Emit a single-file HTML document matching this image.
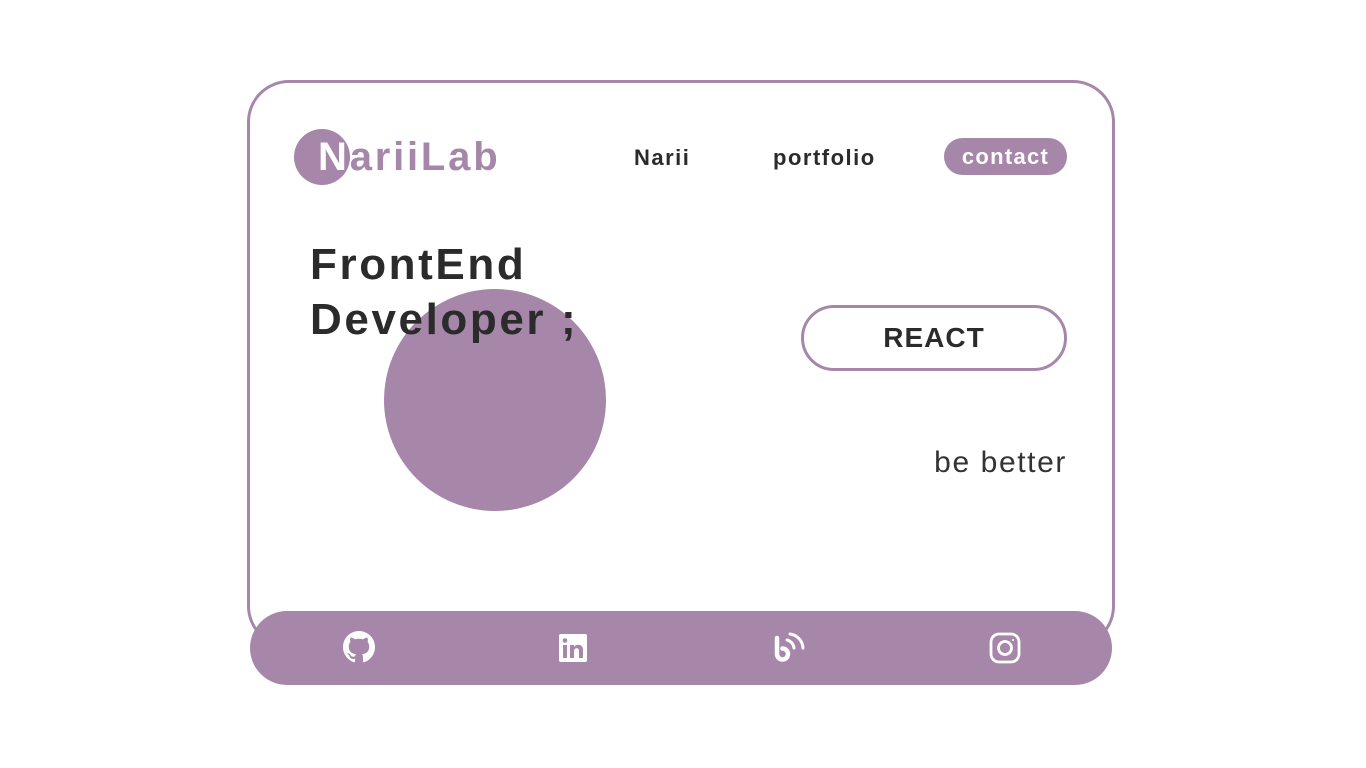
<!DOCTYPE html>
<html><head><meta charset="utf-8"><style>
*{margin:0;padding:0;box-sizing:border-box}
body{width:1366px;height:768px;background:#fff;position:relative;overflow:hidden;font-family:"Liberation Sans",sans-serif;color:#2b2b2b}
.a{position:absolute}
.card{left:247px;top:80px;width:868px;height:568px;border:3px solid #a687a9;border-radius:42px}
.bar{left:250px;top:611px;width:862px;height:74px;background:#a687a9;border-radius:37px}
.logoc{left:294px;top:129px;width:56px;height:56px;border-radius:50%;background:#a687a9}
.logo{left:318px;top:135px;font-size:40px;font-weight:bold;color:#a687a9;letter-spacing:2.8px;line-height:44px}
.nav{font-size:22px;font-weight:bold;top:145px;line-height:26px;letter-spacing:1.5px}
.pill{left:944px;top:138px;width:123px;height:37px;border-radius:19px;background:#a687a9;color:#fff;font-size:22px;font-weight:bold;text-align:center;line-height:38px;letter-spacing:1.3px}
.h{left:310px;font-size:44px;font-weight:bold;letter-spacing:2.6px;line-height:50px}
.circ{left:384px;top:289px;width:222px;height:222px;border-radius:50%;background:#a687a9}
.btn{left:801px;top:305px;width:266px;height:66px;border:3px solid #a687a9;border-radius:33px;text-align:center;line-height:60px;font-size:28px;font-weight:bold;letter-spacing:1px}
.bb{right:299px;top:446px;font-size:30px;line-height:34px;letter-spacing:1.6px;color:#333}
svg{position:absolute}
</style></head><body>
<div class="a card"></div>
<div class="a logoc"></div>
<div class="a logo"><span style="color:#fff">N</span>ariiLab</div>
<div class="a nav" style="left:634px">Narii</div>
<div class="a nav" style="left:773px">portfolio</div>
<div class="a pill">contact</div>
<div class="a circ"></div>
<div class="a h" style="top:240px">FrontEnd</div>
<div class="a h" style="top:295px">Developer ;</div>
<div class="a btn">REACT</div>
<div class="a bb">be better</div>
<div class="a bar"></div>
<svg style="left:343px;top:631px" width="32" height="32" viewBox="0 0 16 16"><path fill="#fff" d="M8 0C3.58 0 0 3.58 0 8c0 3.54 2.29 6.530 5.47 7.59.4.07.55-.17.55-.38v-1.330c-2.230.48-2.7-1.070-2.7-1.070-.36-.92-.89-1.170-.89-1.170-.73-.5.05-.49.05-.49.8.06 1.230.83 1.230.83.72 1.220 1.870.87 2.330.66.07-.52.28-.87.5-1.070-1.780-.2-3.640-.89-3.640-3.950 0-.87.31-1.590.82-2.150-.08-.2-.36-1.020.08-2.120 0 0 .67-.21 2.2.82a7.6 7.6 0 0 1 4 0c1.530-1.040 2.2-.82 2.2-.82.44 1.1.16 1.920.08 2.120.51.56.82 1.270.82 2.150 0 3.070-1.870 3.750-3.650 3.950.29.25.54.73.54 1.480v2.2c0 .21.15.46.55.38A8 8 0 0 0 16 8c0-4.420-3.580-8-8-8z"/></svg>
<svg style="left:558px;top:633px" width="30" height="30" viewBox="0 0 30 30"><rect x="1" y="1" width="28" height="28" rx="2" fill="#fff"/><rect x="5" y="12" width="4" height="13" fill="#a687a9"/><circle cx="7" cy="7.5" r="2.3" fill="#a687a9"/><path d="M12 12h4v2c1-1.6 2.5-2.3 4.2-2.3 3 0 4.8 1.8 4.8 5.5V25h-4v-7c0-2-.8-2.8-2.3-2.8-1.6 0-2.7 1-2.7 3V25h-4z" fill="#a687a9"/></svg>
<svg style="left:772px;top:630px" width="36" height="36" viewBox="0 0 36 36" fill="none" stroke="#fff" stroke-linecap="round"><path d="M5 8v16a5.5 5.5 0 1 0 5.5-5.5" stroke-width="4.5"/><path d="M15 10a9 9 0 0 1 7 8" stroke-width="3"/><path d="M18 4a15 15 0 0 1 13 14" stroke-width="3"/></svg>
<svg style="left:989px;top:632px" width="32" height="32" viewBox="0 0 32 32" fill="none" stroke="#fff" stroke-width="2.8"><rect x="2" y="2" width="28" height="28" rx="8"/><circle cx="16" cy="16" r="6.5"/><circle cx="24" cy="8" r="1" fill="#fff" stroke="none"/></svg>
</body></html>
